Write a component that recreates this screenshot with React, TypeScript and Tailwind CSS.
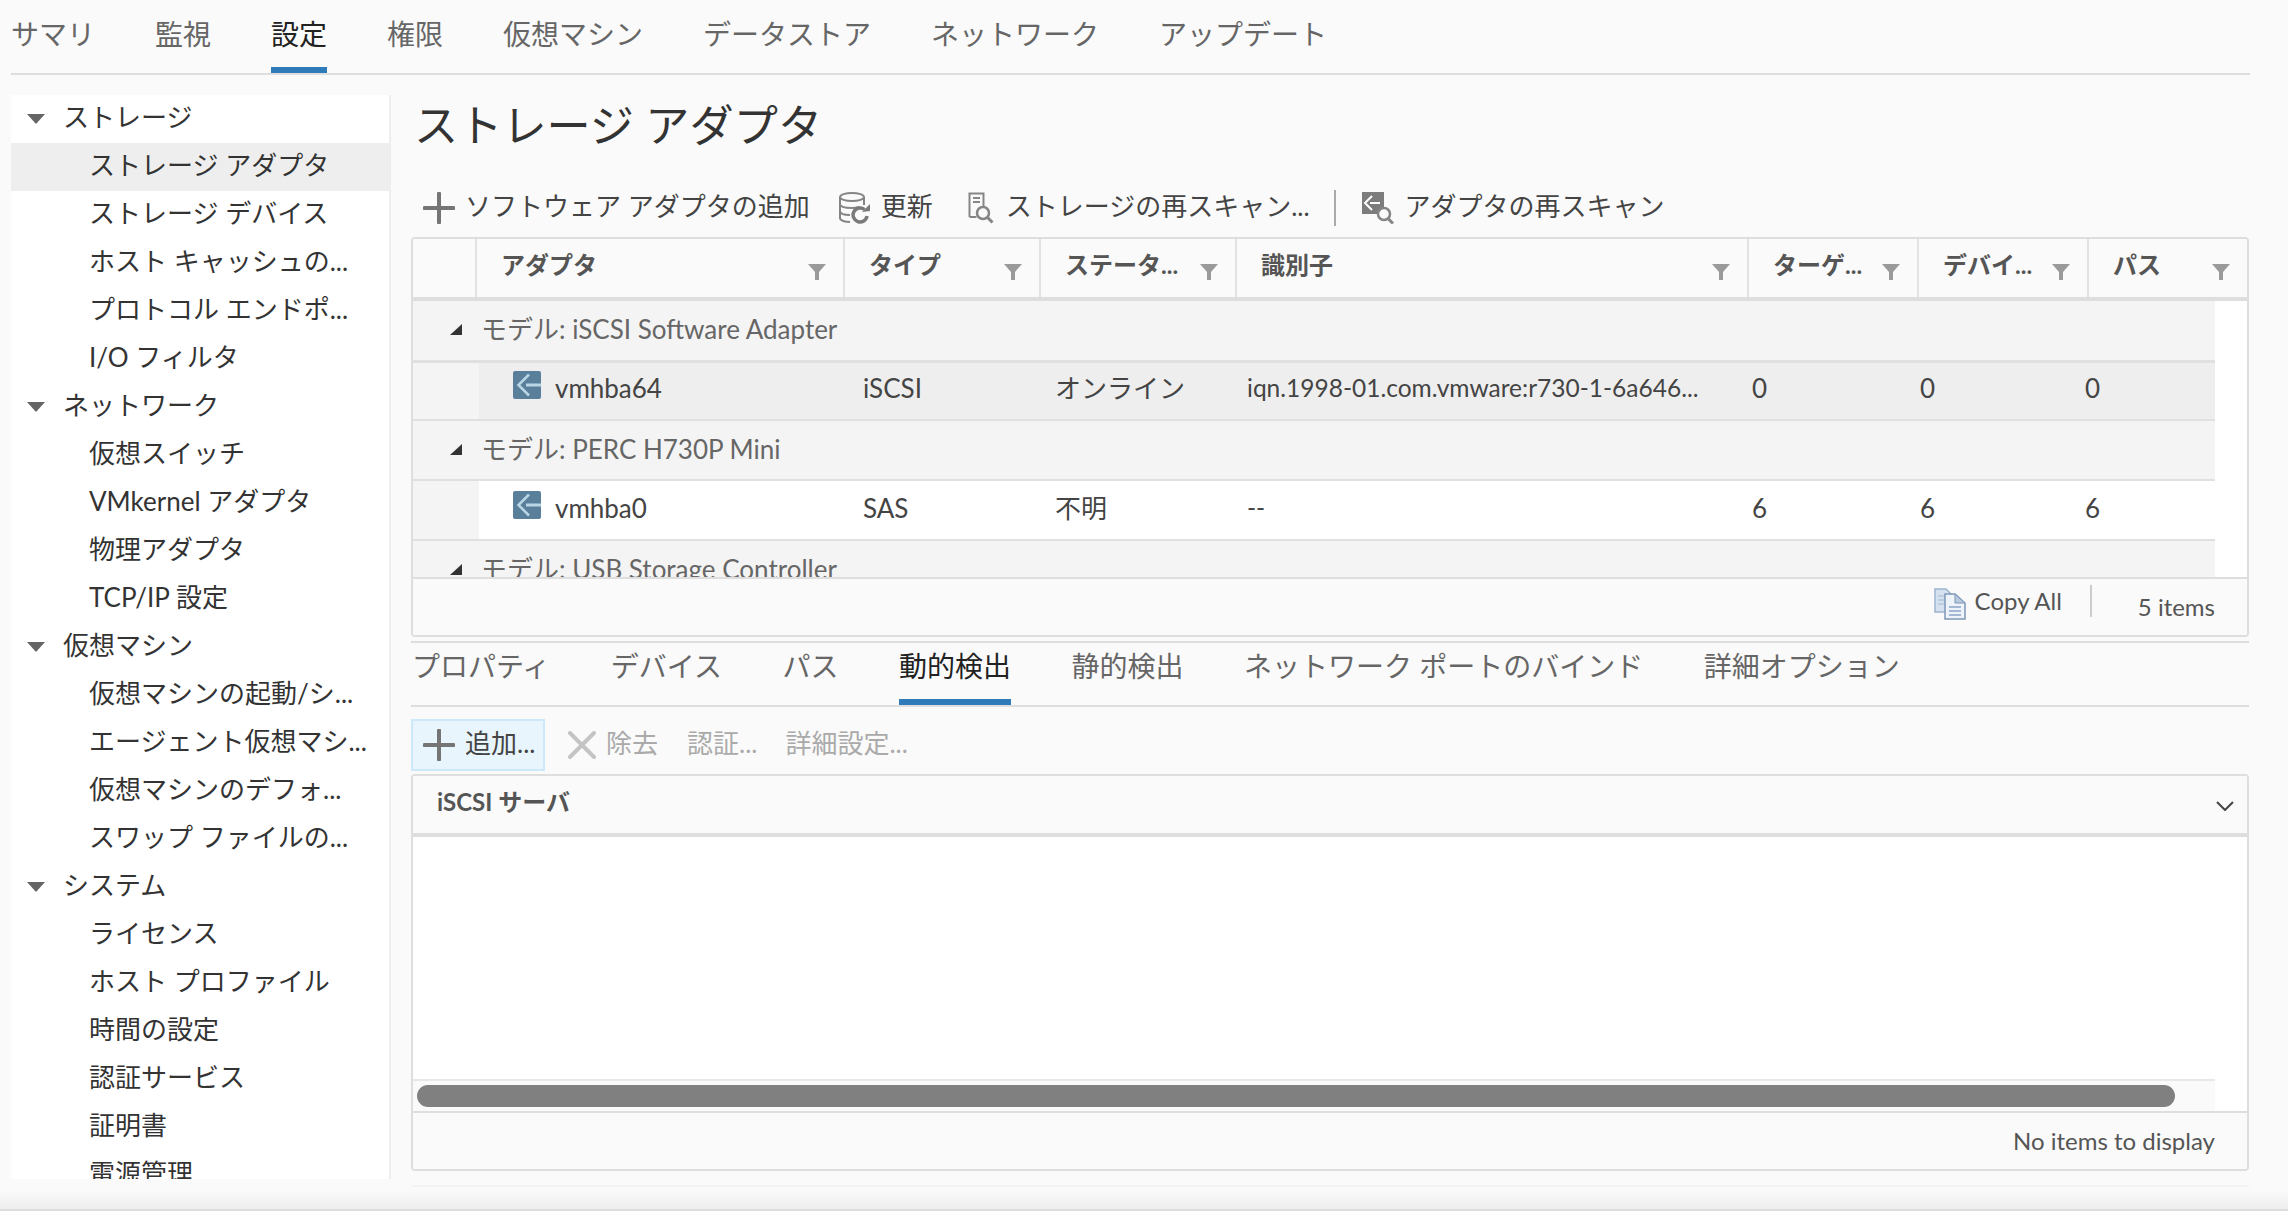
import * as React from 'react';

const FONT = "font-[family-name:Lato,'Noto_Sans_CJK_JP',sans-serif]";

const topTabs = ['サマリ', '監視', '設定', '権限', '仮想マシン', 'データストア', 'ネットワーク', 'アップデート'];
const subTabs = ['プロパティ', 'デバイス', 'パス', '動的検出', '静的検出', 'ネットワーク ポートのバインド', '詳細オプション'];

const sideGroups = [
    { name: 'ストレージ', items: ['ストレージ アダプタ', 'ストレージ デバイス', 'ホスト キャッシュの...', 'プロトコル エンドポ...', 'I/O フィルタ'] },
    { name: 'ネットワーク', items: ['仮想スイッチ', 'VMkernel アダプタ', '物理アダプタ', 'TCP/IP 設定'] },
    { name: '仮想マシン', items: ['仮想マシンの起動/シ...', 'エージェント仮想マシ...', '仮想マシンのデフォ...', 'スワップ ファイルの...'] },
    { name: 'システム', items: ['ライセンス', 'ホスト プロファイル', '時間の設定', '認証サービス', '証明書', '電源管理'] },
];

const columns = [
    { label: 'アダプタ', w: 'w-[368px]' },
    { label: 'タイプ', w: 'w-[196px]' },
    { label: 'ステータ...', w: 'w-[196px]' },
    { label: '識別子', w: 'w-[512px]' },
    { label: 'ターゲ...', w: 'w-[170px]' },
    { label: 'デバイ...', w: 'w-[170px]' },
    { label: 'パス', w: 'w-[158px]' },
];

const PlusIcon = () => (
    <svg width="32" height="32" viewBox="0 0 32 32" className="shrink-0">
        <path d="M16 1.500v29M1.500 16h29" stroke="#757575" strokeWidth="4" strokeLinecap="round" />
    </svg>
);

const CloseIcon = () => (
    <svg width="28" height="28" viewBox="0 0 28 28" className="shrink-0">
        <path d="M2 2l24 24M26 2L2 26" stroke="#c4c4c4" strokeWidth="4" strokeLinecap="round" />
    </svg>
);

const DbRefreshIcon = () => (
    <svg width="34" height="32" viewBox="0 0 34 32" fill="none" className="shrink-0">
        <ellipse cx="14" cy="5" rx="12" ry="4" stroke="#858585" strokeWidth="2" />
        <path d="M2 5v21c0 2.500 5 4 10 4M26 5v8M2 12c0 2.500 5 4 12 4 3 0 5-.3 7-1M2 19c0 2.500 4 4 10 4" stroke="#858585" strokeWidth="2" />
        <path d="M29 24a7 7 0 1 1-2.500-6.500" stroke="#7a7a7a" strokeWidth="3.500" />
        <path d="M24 20l8-1 0-7z" fill="#7a7a7a" />
    </svg>
);

const DocSearchIcon = () => (
    <svg width="26" height="32" viewBox="0 0 26 32" fill="none" className="shrink-0">
        <path d="M1.500 25V1.500h14V14M1.500 25h7" stroke="#858585" strokeWidth="2" />
        <path d="M5 6h7M5 10h7" stroke="#858585" strokeWidth="2" />
        <circle cx="15" cy="21" r="6" stroke="#858585" strokeWidth="2.500" />
        <path d="M19.500 25.500l5 5" stroke="#858585" strokeWidth="3" />
    </svg>
);

const AdapterSearchIcon = () => (
    <svg width="32" height="32" viewBox="0 0 32 32" fill="none" className="shrink-0">
        <rect x="0" y="0" width="22" height="22" fill="#7c7c7c" />
        <path d="M10 4l-7 7 7 7" stroke="#fff" strokeWidth="2" />
        <path d="M8 11h10" stroke="#fff" strokeWidth="2" />
        <circle cx="22" cy="22" r="6" fill="#fafafa" stroke="#858585" strokeWidth="2.500" />
        <path d="M26 26.500l5 5" stroke="#858585" strokeWidth="3" />
    </svg>
);

const AdapterIcon = () => (
    <svg width="28" height="28" viewBox="0 0 28 28" fill="none" className="mb-[6px] shrink-0">
        <rect width="28" height="28" rx="2" fill="#5a7f9b" />
        <path d="M16 3.500L5.500 14 16 24.500" stroke="#b9d6e6" strokeWidth="2.500" />
        <path d="M13 14h15" stroke="#b9d6e6" strokeWidth="3" />
    </svg>
);

const CopyIcon = () => (
    <svg width="32" height="32" viewBox="0 0 32 32" fill="none" className="mb-[6px] shrink-0">
        <path d="M1 1h11l5 5v18H1z" fill="#d5e1ef" stroke="#9db4cf" strokeWidth="1.500" />
        <path d="M4 8h7M4 12h7M4 16h7" stroke="#b3c6dc" strokeWidth="1.500" />
        <path d="M11 6h10l10 9v16H11z" fill="#eef3f9" stroke="#7d98b8" strokeWidth="1.500" />
        <path d="M21 6v9h10z" fill="#b9cade" stroke="#7d98b8" strokeWidth="1" />
        <path d="M15 19h12M15 23h12M15 27h12" stroke="#8aa6c6" strokeWidth="1.500" />
    </svg>
);

const FilterIcon = () => (
    <svg width="18" height="16" viewBox="0 0 18 16" className="shrink-0">
        <path d="M0 0h18L11 8v8H7V8z" fill="#9a9a9a" />
    </svg>
);

const SideCaret = () => (
    <svg width="18" height="10" viewBox="0 0 18 10" className="shrink-0">
        <path d="M0 0h18L9 10z" fill="#666" />
    </svg>
);

const GroupCaret = () => (
    <svg width="12" height="11" viewBox="0 0 12 11" className="shrink-0">
        <path d="M12 0v11H0z" fill="#333" />
    </svg>
);

const TableHead = () => (
    <div className="flex h-[62px] border-b-4 border-[#dedede] bg-[#fafafa]">
        <div className="w-[64px] shrink-0 border-r-2 border-[#e2e2e2]" />
        {columns.map((c, i) => (
            <div
                key={c.label}
                className={`${c.w} relative shrink-0 pl-[24px] pt-[7px] text-[24px] leading-[38px] font-bold text-[#555] ${i < columns.length - 1 ? 'border-r-2 border-[#e2e2e2]' : ''}`}
            >
                {c.label}
                <div className="absolute right-[17px] top-[25px]"><FilterIcon /></div>
            </div>
        ))}
    </div>
);

const GroupRow = ({ label, thick }: { label: string; thick?: boolean }) => (
    <div className={`flex items-center bg-[#f4f4f4] pl-[37px] pb-[2px] text-[26px] text-[#666] ${thick ? 'h-[62px] border-b-[3px]' : 'h-[60px] border-b-2'} border-[#e0e0e0]`}>
        <GroupCaret />
        <span className="ml-[19px]">{label}</span>
    </div>
);

const DataRow = ({ name, values, selected }: { name: string; values: string[]; selected?: boolean }) => (
    <div className={`flex border-b-2 border-[#e0e0e0] text-[26px] text-[#444] ${selected ? 'h-[58px]' : 'h-[60px]'}`}>
        <div className="w-[66px] shrink-0 bg-[#f4f4f4]" />
        <div className={`flex flex-1 items-center ${selected ? 'bg-[#eeeeee] pb-[6px]' : 'bg-white pb-[4px]'}`}>
            <div className="flex w-[384px] shrink-0 items-center pl-[34px]">
                <AdapterIcon />
                <span className="ml-[14px]">{name}</span>
            </div>
            <span className="w-[192px] shrink-0">{values[0]}</span>
            <span className="w-[192px] shrink-0">{values[1]}</span>
            <span className="w-[505px] shrink-0 text-[24.5px]">{values[2]}</span>
            <span className="w-[168px] shrink-0">{values[3]}</span>
            <span className="w-[165px] shrink-0">{values[4]}</span>
            <span>{values[5]}</span>
        </div>
    </div>
);

export default function App() {
    return (
        <div className={`${FONT} flex h-[1216px] w-[2288px] flex-col overflow-hidden bg-[#fafafa] text-[#444]`}>
            {/* 上部タブ */}
            <div className="mx-[11px] flex h-[75px] w-[2239px] shrink-0 gap-[60px] border-b-2 border-[#dedede] text-[28px] leading-[68px] text-[#666]">
                {topTabs.map((t) => (
                    <div key={t} className={`h-[73px] ${t === '設定' ? 'border-b-[6px] border-[#2f7ab8] text-[#222]' : ''}`}>{t}</div>
                ))}
            </div>

            <div className="flex min-h-0 flex-1">
                {/* 左ナビ */}
                <div className="ml-[11px] mt-[20px] h-[1084px] w-[380px] shrink-0 overflow-hidden border-r-2 border-[#eeeeee] bg-white text-[26px] leading-[44px] text-[#333]">
                    {sideGroups.map((g) => (
                        <div key={g.name}>
                            <div className="flex h-[48px] items-center pl-[16px]">
                                <SideCaret />
                                <span className="mb-[4px] ml-[18px]">{g.name}</span>
                            </div>
                            {g.items.map((item) => (
                                <div key={item} className={`h-[48px] pl-[78px] whitespace-nowrap ${item === 'ストレージ アダプタ' ? 'bg-[#eeeeee]' : ''}`}>{item}</div>
                            ))}
                        </div>
                    ))}
                </div>

                {/* メイン */}
                <div className="ml-[20px] flex w-[1838px] shrink-0 flex-col pt-[20px]">
                    <h1 className="h-[60px] pl-[3px] text-[44.2px] leading-[60px] text-[#333]">ストレージ アダプタ</h1>

                    <div className="mt-[35px] flex h-[36px] items-center pl-[12px] text-[26px] text-[#444]">
                        <PlusIcon />
                        <span className="ml-[10px] pb-[3px]">ソフトウェア アダプタの追加</span>
                        <span className="ml-[28px]"><DbRefreshIcon /></span>
                        <span className="ml-[9px] pb-[3px]">更新</span>
                        <span className="ml-[35px]"><DocSearchIcon /></span>
                        <span className="ml-[12px] pb-[3px]">ストレージの再スキャン...</span>
                        <div className="ml-[24px] h-[36px] w-[2px] bg-[#aaa]" />
                        <span className="ml-[26px]"><AdapterSearchIcon /></span>
                        <span className="ml-[11px] pb-[3px]">アダプタの再スキャン</span>
                    </div>

                    {/* アダプタ一覧 */}
                    <div className="mt-[11px] h-[400px] shrink-0 overflow-hidden rounded-[4px] border-2 border-[#dedede] bg-white">
                        <TableHead />
                        <div className="h-[276px] w-[1802px] overflow-hidden">
                            <GroupRow label="モデル: iSCSI Software Adapter" thick />
                            <DataRow name="vmhba64" selected values={['iSCSI', 'オンライン', 'iqn.1998-01.com.vmware:r730-1-6a646...', '0', '0', '0']} />
                            <GroupRow label="モデル: PERC H730P Mini" />
                            <DataRow name="vmhba0" values={['SAS', '不明', '--', '6', '6', '6']} />
                            <GroupRow label="モデル: USB Storage Controller" />
                        </div>
                        <div className="flex h-[58px] items-center justify-end border-t-2 border-[#dedede] bg-[#fafafa] pr-[32px]">
                            <CopyIcon />
                            <span className="ml-[9px] pb-[12px] text-[24px] text-[#555]">Copy All</span>
                            <div className="mb-[12px] ml-[28px] h-[32px] w-[2px] bg-[#ccc]" />
                            <span className="ml-[46px] text-[24px] text-[#555]">5 items</span>
                        </div>
                    </div>

                    {/* 下部タブ */}
                    <div className="mt-[4px] flex h-[66px] shrink-0 gap-[60.5px] border-y-2 border-[#dedede] pl-px text-[28px] leading-[46px] text-[#666]">
                        {subTabs.map((t) => (
                            <div key={t} className={`h-[62px] ${t === '動的検出' ? 'border-b-[6px] border-[#2f7ab8] text-[#222]' : ''}`}>{t}</div>
                        ))}
                    </div>

                    <div className="mt-[12px] flex h-[52px] shrink-0 items-center text-[26px]">
                        <div className="flex h-[52px] w-[134px] items-center border-2 border-[#cde7fb] bg-[#e9f5fc] pl-[10px] text-[#444]">
                            <PlusIcon />
                            <span className="ml-[10px] pb-[3px]">追加...</span>
                        </div>
                        <div className="ml-[23px]"><CloseIcon /></div>
                        <span className="ml-[10px] pb-[3px] text-[#aaa]">除去</span>
                        <span className="ml-[29px] pb-[3px] text-[#aaa]">認証...</span>
                        <span className="ml-[28px] pb-[3px] text-[#aaa]">詳細設定...</span>
                    </div>

                    {/* iSCSI サーバ */}
                    <div className="mt-[3px] flex h-[397px] shrink-0 flex-col overflow-hidden rounded-[4px] border-2 border-[#dedede] bg-white">
                        <div className="flex h-[61px] shrink-0 items-center justify-between border-b-4 border-[#dedede] bg-[#fafafa] pl-[24px] pr-[13px]">
                            <span className="pb-[5px] text-[24px] font-bold text-[#555]">iSCSI サーバ</span>
                            <svg width="18" height="10" viewBox="0 0 18 10" fill="none" className="mt-[3px]">
                                <path d="M1 1l8 8 8-8" stroke="#444" strokeWidth="2" />
                            </svg>
                        </div>
                        <div className="flex-1" />
                        <div className="h-[32px] w-[1802px] shrink-0 border-t-2 border-[#e8e8e8] bg-[#fafafa] pl-[4px] pt-[4px]">
                            <div className="h-[22px] w-[1758px] rounded-full bg-[#808080]" />
                        </div>
                        <div className="flex h-[58px] shrink-0 items-center justify-end border-t-2 border-[#dedede] bg-[#fafafa] pr-[32px] text-[24px] text-[#555]">
                            No items to display
                        </div>
                    </div>

                    <div className="mt-[14px] h-[2px] shrink-0 bg-[#f3f3f3]" />
                </div>
            </div>

            <div className="h-[19px] shrink-0 bg-gradient-to-b from-[#fafafa] to-[#eeeeee]" />
            <div className="h-[7px] shrink-0 border-t-2 border-[#dcdcdc] bg-white" />
        </div>
    );
}
